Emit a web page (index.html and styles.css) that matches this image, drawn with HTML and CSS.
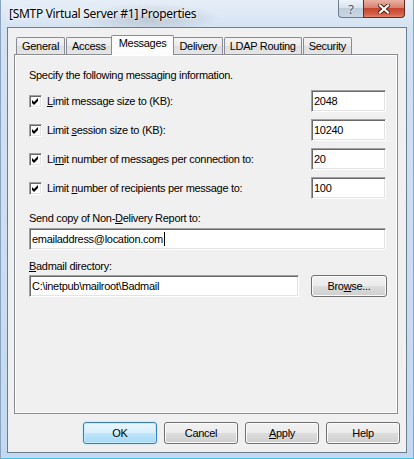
FILE: index.html
```html
<!DOCTYPE html>
<html lang="en">
<head>
  <meta charset="UTF-8" />
  <meta name="viewport" content="width=device-width, initial-scale=1.0"/>
  <title>[SMTP Virtual Server #1] Properties</title>
  <link rel="stylesheet" href="styles.css">
</head>
<body>

  <div class="window">
    <div class="titlebar">
      <span class="title">[SMTP Virtual Server #1] Properties</span>
      <div class="caption-buttons">
        <span class="cap-btn cap-help">?</span>
        <span class="cap-btn cap-close">
          <svg width="12" height="10" viewBox="0 0 12 10">
            <path d="M2 1.5 L10 8.5 M10 1.5 L2 8.5" stroke="#4a1a12" stroke-width="4" stroke-linecap="square"/>
            <path d="M2 1.5 L10 8.5 M10 1.5 L2 8.5" stroke="#fff" stroke-width="2.2" stroke-linecap="square"/>
          </svg>
        </span>
      </div>
    </div>

    <div class="client">
      <div class="tabs">
        <div class="tab">General</div>
        <div class="tab">Access</div>
        <div class="tab active">Messages</div>
        <div class="tab">Delivery</div>
        <div class="tab">LDAP Routing</div>
        <div class="tab">Security</div>
      </div>

      <div class="panel">
        <p class="intro">Specify the following messaging information.</p>

        <div class="limits">
          <div class="limit-row">
            <label class="check"><span class="box"><svg width="7" height="7" viewBox="0 0 7 7"><polygon points="0,2 2,4 6,0 6,3 2,7 0,5" fill="#000"/></svg></span><span><u>L</u>imit message size to (KB):</span></label>
            <div class="field small">2048</div>
          </div>
          <div class="limit-row">
            <label class="check"><span class="box"><svg width="7" height="7" viewBox="0 0 7 7"><polygon points="0,2 2,4 6,0 6,3 2,7 0,5" fill="#000"/></svg></span><span>Limit <u>s</u>ession size to (KB):</span></label>
            <div class="field small">10240</div>
          </div>
          <div class="limit-row">
            <label class="check"><span class="box"><svg width="7" height="7" viewBox="0 0 7 7"><polygon points="0,2 2,4 6,0 6,3 2,7 0,5" fill="#000"/></svg></span><span>Li<u>m</u>it number of messages per connection to:</span></label>
            <div class="field small">20</div>
          </div>
          <div class="limit-row">
            <label class="check"><span class="box"><svg width="7" height="7" viewBox="0 0 7 7"><polygon points="0,2 2,4 6,0 6,3 2,7 0,5" fill="#000"/></svg></span><span>Limit <u>n</u>umber of recipients per message to:</span></label>
            <div class="field small">100</div>
          </div>
        </div>

        <p class="label ndr-label">Send copy of Non-<u>D</u>elivery Report to:</p>
        <div class="field wide">emailaddress@location.com<span class="caret"></span></div>

        <p class="label badmail-label"><u>B</u>admail directory:</p>
        <div class="browse-row">
          <div class="field grow">C:\inetpub\mailroot\Badmail</div>
          <button class="btn browse">Bro<u>w</u>se...</button>
        </div>
      </div>

      <div class="actions">
        <button class="btn default">OK</button>
        <button class="btn">Cancel</button>
        <button class="btn"><u>A</u>pply</button>
        <button class="btn">Help</button>
      </div>
    </div>
  </div>

</body>
</html>
```

FILE: styles.css
```css
body {
  margin: 0;
  font-family: "Liberation Sans", Arial, sans-serif;
  font-size: 11px;
  letter-spacing: -0.3px;
  color: #000;
}

.window {
  width: 414px;
  height: 459px;
  box-sizing: border-box;
  padding: 0 7px 6px;
  display: flex;
  flex-direction: column;
  background:
    radial-gradient(ellipse 70px 14px at 150px 18px, rgba(120,130,140,0.35), transparent),
    linear-gradient(180deg, #e6eef7 0px, #d3e2f2 30px, #c4d9ef 100%);
  box-shadow: inset 1px 0 0 #8aa3bf, inset -1px 0 0 #38c6ee, inset 0 -1px 0 #38c6ee;
}

/* caption */
.titlebar {
  height: 27px;
  display: flex;
  justify-content: space-between;
  align-items: flex-start;
  padding: 0 2px;
}

.title {
  font-family: "Noto Sans", "Open Sans", sans-serif;
  font-size: 12px;
  letter-spacing: -0.3px;
  line-height: 16px;
  margin-top: 6px;
  text-shadow: 0 0 6px #fff, 0 0 3px #fff;
}

.caption-buttons {
  display: flex;
}

.cap-btn {
  height: 18px;
  display: flex;
  align-items: center;
  justify-content: center;
  box-sizing: border-box;
  border: 1px solid #6d7c8d;
  border-top: none;
}

.cap-help {
  width: 25px;
  border-right: none;
  border-radius: 0 0 0 4px;
  background: linear-gradient(180deg, #eef3f8 0%, #d9e3ee 45%, #bfcddc 50%, #c9d6e4 100%);
  font-family: "Noto Sans", sans-serif;
  font-size: 13px;
  color: #4b5561;
  letter-spacing: 0;
  text-shadow: 0 0 2px #fff;
}

.cap-close {
  width: 42px;
  border-color: #6b2a20;
  border-radius: 0 0 4px 0;
  background: linear-gradient(180deg, #e9b2a4 0%, #d98270 45%, #c5452d 50%, #d5614a 85%, #e08a6c 100%);
}

/* client area */
.client {
  flex: 1;
  display: flex;
  flex-direction: column;
  border: 1px solid #6c7d92;
  background: #f0f0f0;
  padding: 7px 8px 8px 6px;
}

.tabs {
  display: flex;
  align-items: flex-end;
  padding-left: 2px;
  margin-bottom: -1px;
}

.tab {
  height: 17px;
  box-sizing: border-box;
  margin-bottom: 1px;
  margin-right: 1px;
  padding: 0 5px;
  line-height: 16px;
  border: 1px solid #898c95;
  border-bottom: none;
  border-radius: 2px 2px 0 0;
  background: linear-gradient(180deg, #f3f3f3 0%, #ebebeb 50%, #dedede 50%, #e5e5e5 100%);
  white-space: nowrap;
}

.tab.active {
  position: relative;
  z-index: 1;
  height: 20px;
  margin: 0 -1px 0 -2px;
  padding: 0 7px;
  line-height: 15px;
  background: #fcfcfc;
}

.panel {
  height: 360px;
  box-sizing: border-box;
  border: 1px solid #898c95;
  background: #f0f0f0;
  box-shadow: inset 1px 1px 0 #fff, inset -1px -1px 0 #fff;
  padding: 13px 10px 0 14px;
}

.intro, .label {
  margin: 0;
  line-height: 14px;
}

.limits {
  margin-top: 8px;
  display: flex;
  flex-direction: column;
  gap: 7px;
}

.limit-row {
  height: 22px;
  display: flex;
  justify-content: space-between;
  align-items: center;
}

.check {
  display: flex;
  align-items: center;
  gap: 5px;
}

.box {
  width: 13px;
  height: 13px;
  box-sizing: border-box;
  display: flex;
  align-items: center;
  justify-content: center;
  background: #fff;
  border: 1px solid;
  border-color: #a0a0a0 #fff #fff #a0a0a0;
  box-shadow: inset 1px 1px 0 #696969, inset -1px -1px 0 #e3e3e3;
}

.field {
  height: 22px;
  box-sizing: border-box;
  padding: 0 2px;
  line-height: 20px;
  background: #fff;
  border: 1px solid;
  border-color: #a0a0a0 #fff #fff #a0a0a0;
  box-shadow: inset 1px 1px 0 #696969, inset -1px -1px 0 #e3e3e3;
  white-space: nowrap;
  overflow: hidden;
}

.field.small {
  width: 75px;
  margin-right: 1px;
}

.field.wide {
  margin-top: 3px;
  margin-right: 1px;
}

.caret {
  display: inline-block;
  width: 1px;
  height: 14px;
  margin-left: 1px;
  vertical-align: -3px;
  background: #000;
}

.ndr-label {
  margin-top: 12px;
}

.badmail-label {
  margin-top: 9px;
}

.browse-row {
  margin-top: 2px;
  display: flex;
  gap: 12px;
}

.field.grow {
  flex: 1;
}

/* push buttons */
.btn {
  width: 74px;
  height: 22px;
  padding: 0;
  font-family: inherit;
  font-size: 11px;
  letter-spacing: -0.3px;
  color: #000;
  border: 1px solid #707070;
  border-radius: 3px;
  background: linear-gradient(180deg, #f2f2f2 0%, #ebebeb 49%, #dddddd 50%, #cfcfcf 100%);
  box-shadow: inset 0 0 0 1px #fbfbfb;
}

.btn.browse {
  width: 76px;
}

.btn.default {
  border-color: #3c7fb1;
  background: linear-gradient(180deg, #eaf6fd 0%, #d9f0fc 49%, #bee6fd 50%, #a7d9f5 100%);
  box-shadow: inset 0 0 0 1px #c6ecfc, 0 0 2px #9fdcf5;
}

.actions {
  margin-top: 8px;
  margin-right: -2px;
  display: flex;
  justify-content: flex-end;
  gap: 7px;
}
```
